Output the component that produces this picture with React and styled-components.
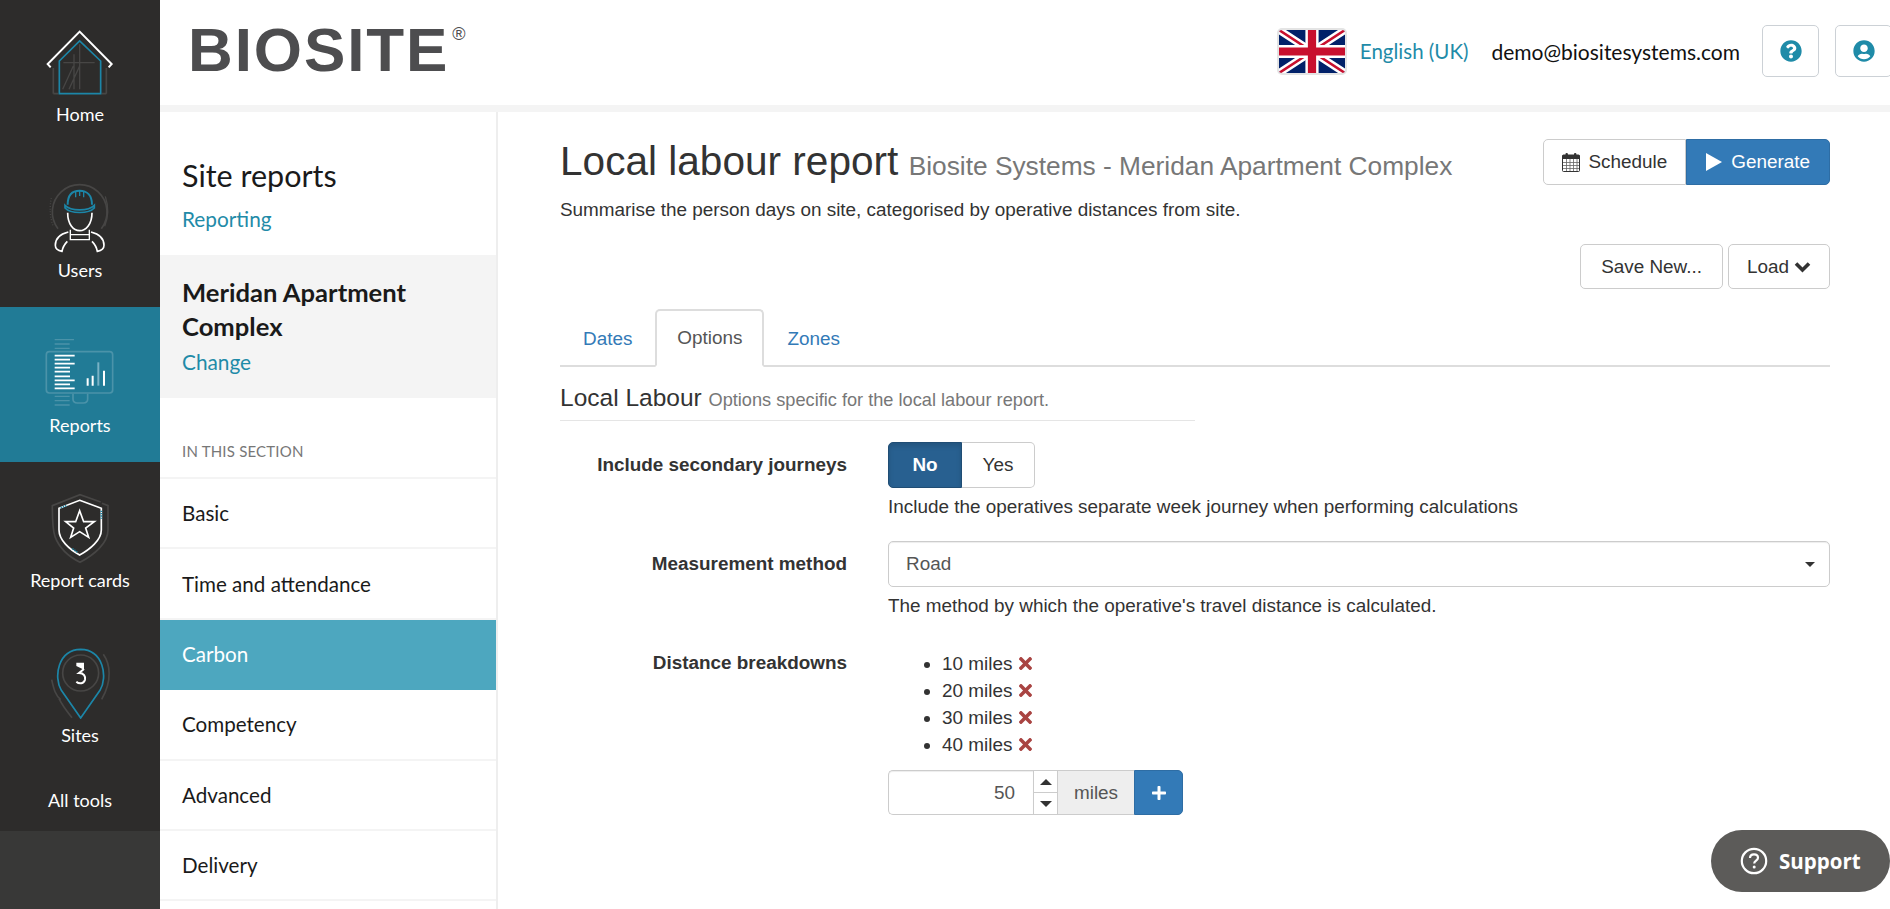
import React from 'react'
import styled, { createGlobalStyle } from 'styled-components'
import { FaQuestionCircle, FaUserCircle, FaTimes, FaPlus } from 'react-icons/fa'

const GlobalStyle = createGlobalStyle`
  html, body {
    margin: 0;
    padding: 0;
    background: #fff;
  }
  * { box-sizing: border-box; }
`

const SOFT = `Lato, "Noto Sans", sans-serif`
const ARIAL = `"Liberation Sans", Arial, sans-serif`

const Page = styled.div`
  display: flex;
  width: 1890px;
  height: 909px;
  overflow: hidden;
  position: relative;
  font-family: ${ARIAL};
  font-size: 18.9px;
  color: #333;
`

const Rail = styled.nav`
  width: 160px;
  flex: none;
  display: flex;
  flex-direction: column;
  background: #383837;
`

const RailItem = styled.a`
  display: flex;
  flex-direction: column;
  align-items: center;
  height: ${p => (p.$first ? 151.5 : 155.3)}px;
  padding-top: ${p => (p.$first ? 26 : 30)}px;
  background: ${p => (p.$active ? '#217b96' : '#2d2c2b')};
  color: #fff;
  font-family: ${SOFT};
  font-size: 18px;
  line-height: 22px;
  svg { display: block; height: 72px; margin-bottom: 5px; }
`

const RailTools = styled.a`
  height: 58.3px;
  padding-bottom: 3px;
  display: flex;
  align-items: center;
  justify-content: center;
  background: #2d2c2b;
  color: #fff;
  font-family: ${SOFT};
  font-size: 18px;
`

const Column = styled.div`
  flex: 1;
  min-width: 0;
  display: flex;
  flex-direction: column;
`

const Header = styled.header`
  height: 112px;
  flex: none;
  display: flex;
  align-items: center;
  padding: 0 0 3px 28px;
  border-bottom: 7px solid #f4f4f4;
`

const Logo = styled.div`
  font-family: ${ARIAL};
  font-weight: 700;
  font-size: 62px;
  line-height: 62px;
  color: #4d4d4f;
  letter-spacing: 1.9px;
  margin-top: -3px;
  sup {
    font-size: 18px;
    font-weight: 400;
    line-height: 0;
    vertical-align: 31px;
    margin-left: 3px;
    letter-spacing: 0;
  }
`

const HeaderRight = styled.div`
  margin-left: auto;
  margin-right: -2px;
  display: flex;
  align-items: center;
`

const Flag = styled.svg`
  width: 70px;
  height: 47px;
  border: 2px solid #e4e4e4;
  border-radius: 5px;
  margin-right: 13px;
`

const Lang = styled.a`
  font-family: ${SOFT};
  font-size: 20.5px;
  color: #1f8ba8;
  margin-right: 23px;
`

const Email = styled.span`
  font-family: ${SOFT};
  font-size: 21px;
  color: #111;
  margin-right: 22px;
`

const IconButton = styled.button`
  width: 57px;
  height: 52px;
  margin-left: ${p => (p.$tight ? 16 : 0)}px;
  background: #fff;
  border: 1px solid #ccd1d6;
  border-radius: 5px;
  display: flex;
  align-items: center;
  justify-content: center;
  color: #1f8ba8;
  font-size: 22px;
  padding: 0;
`

const Body = styled.div`
  flex: 1;
  min-height: 0;
  display: flex;
`

const SectionNav = styled.aside`
  width: 338px;
  flex: none;
  border-right: 2px solid #eee;
  font-family: ${SOFT};
`

const NavTop = styled.div`
  height: 143px;
  padding: 45px 22px 0 22px;
`

const NavTitle = styled.div`
  font-size: 30.5px;
  line-height: 36px;
  color: #1a1a1a;
  margin-bottom: 14px;
`

const TealLink = styled.a`
  display: block;
  font-size: 20.8px;
  line-height: 24px;
  color: #1f8ba8;
`

const SiteBlock = styled.div`
  height: 143px;
  padding: 20px 22px 0 22px;
  background: #f4f4f4;
`

const SiteName = styled.div`
  font-size: 25.6px;
  line-height: 34px;
  font-weight: 700;
  color: #1a1a1a;
  margin-bottom: 7px;
`

const SectionLabel = styled.div`
  height: 81px;
  padding: 44px 0 0 22px;
  font-size: 15px;
  line-height: 18px;
  letter-spacing: 0.2px;
  color: #777;
  border-bottom: 2px solid #f4f4f4;
`

const SectionRow = styled.a`
  display: flex;
  align-items: center;
  height: 70.4px;
  padding-left: 22px;
  font-size: 20.6px;
  color: ${p => (p.$active ? '#fff' : '#1a1a1a')};
  background: ${p => (p.$active ? '#4da7bf' : '#fff')};
  border-bottom: 2px solid ${p => (p.$active ? '#4da7bf' : '#f4f4f4')};
`

const Main = styled.main`
  flex: 1;
  min-width: 0;
  padding: 27px 60px 0 62px;
`

const TitleRow = styled.div`
  display: flex;
  align-items: flex-start;
  justify-content: space-between;
`

const Title = styled.h1`
  margin: 0;
  font-size: 40.6px;
  font-weight: 400;
  line-height: 44px;
  color: #333;
  small {
    font-size: 26.3px;
    color: #777;
    margin-left: -1px;
  }
`

const ButtonGroup = styled.div`
  display: flex;
`

const Button = styled.button`
  height: ${p => p.$h || 46}px;
  padding: 0 ${p => p.$px || 17}px;
  display: flex;
  align-items: center;
  gap: ${p => p.$gap || 8}px;
  font-family: ${ARIAL};
  font-size: 18.9px;
  color: ${p => (p.$primary ? '#fff' : '#333')};
  background: ${p => (p.$primary ? '#337ab7' : '#fff')};
  border: 1px solid ${p => (p.$primary ? '#2e6da4' : '#ccc')};
  border-radius: ${p => p.$radius || '5px'};
`

const Lead = styled.p`
  margin: 9px 0 0;
  font-size: 18.9px;
  line-height: 26px;
  color: #333;
`

const ActionsRow = styled.div`
  display: flex;
  justify-content: flex-end;
  gap: 5px;
  margin-top: 21px;
`

const Tabs = styled.div`
  display: flex;
  margin-top: 20px;
  height: 58px;
  border-bottom: 2px solid #ddd;
`

const Tab = styled.a`
  height: 58px;
  display: flex;
  align-items: center;
  padding: 0 ${p => (p.$active ? 20 : 21)}px;
  font-size: 18.9px;
  color: ${p => (p.$active ? '#555' : '#337ab7')};
  background: ${p => (p.$active ? '#fff' : 'transparent')};
  border: 2px solid ${p => (p.$active ? '#ddd' : 'transparent')};
  border-bottom: ${p => (p.$active ? '2px solid #fff' : '0')};
  border-radius: 5px 5px 0 0;
`

const Legend = styled.div`
  width: 635px;
  margin: 15px 0 21px;
  padding-bottom: 4px;
  font-size: 24.5px;
  line-height: 32px;
  border-bottom: 1px solid #e5e5e5;
  color: #333;
  small {
    font-size: 18.2px;
    color: #777;
  }
`

const FormRow = styled.div`
  display: grid;
  grid-template-columns: 287px 1fr;
  column-gap: 41px;
  margin-bottom: ${p => p.$mb || 0}px;
`

const Label = styled.label`
  text-align: right;
  font-weight: 700;
  font-size: 18.9px;
  line-height: 46px;
  color: #333;
`

const Toggle = styled.div`
  display: flex;
`

const ToggleOption = styled.button`
  height: 46px;
  width: ${p => (p.$on ? 74 : 73)}px;
  padding: 0;
  font-family: ${ARIAL};
  font-size: 18.9px;
  font-weight: ${p => (p.$on ? 700 : 400)};
  color: ${p => (p.$on ? '#fff' : '#333')};
  background: ${p => (p.$on ? '#286090' : '#fff')};
  border: 1px solid ${p => (p.$on ? '#204d74' : '#ccc')};
  border-left-width: ${p => (p.$on ? 1 : 0)}px;
  border-radius: ${p => (p.$on ? '5px 0 0 5px' : '0 5px 5px 0')};
  box-shadow: ${p => (p.$on ? 'inset 0 3px 5px rgba(0,0,0,.125)' : 'none')};
`

const Help = styled.div`
  margin-top: 6px;
  font-size: 18.9px;
  line-height: 26px;
  color: #333;
`

const Select = styled.div`
  height: 46px;
  display: flex;
  align-items: center;
  justify-content: space-between;
  padding: 0 14px 0 17px;
  font-size: 18.9px;
  color: #555;
  border: 1px solid #ccc;
  border-radius: 5px;
  box-shadow: inset 0 1px 1px rgba(0,0,0,.075);
`

const Caret = styled.span`
  width: 0;
  height: 0;
  border-left: 5px solid transparent;
  border-right: 5px solid transparent;
  border-top: 5px solid #333;
`

const Breakdown = styled.ul`
  margin: 0;
  padding: 10px 0 0 54px;
  font-size: 18.9px;
  line-height: 27px;
  color: #333;
  svg {
    color: #a94442;
    font-size: 19px;
    margin-left: 4px;
    vertical-align: -3px;
  }
`

const AddGroup = styled.div`
  display: flex;
  width: 295px;
  height: 45px;
  margin-top: 12px;
`

const NumberBox = styled.div`
  width: 145px;
  display: flex;
  align-items: center;
  justify-content: flex-end;
  padding-right: 18px;
  font-size: 18.9px;
  color: #555;
  border: 1px solid #ccc;
  border-right: 0;
  border-radius: 5px 0 0 5px;
  box-shadow: inset 0 1px 1px rgba(0,0,0,.075);
`

const Spinner = styled.div`
  width: 24px;
  display: flex;
  flex-direction: column;
  border: 1px solid #ccc;
  border-right: 0;
`

const SpinCell = styled.div`
  flex: 1;
  display: flex;
  align-items: center;
  justify-content: center;
  border-top: ${p => (p.$down ? '1px solid #ccc' : '0')};
  &::after {
    content: '';
    border-left: 6px solid transparent;
    border-right: 6px solid transparent;
    ${p => (p.$down ? 'border-top: 6px solid #333;' : 'border-bottom: 6px solid #333;')}
  }
`

const Addon = styled.div`
  width: 77px;
  display: flex;
  align-items: center;
  justify-content: center;
  font-size: 18.9px;
  color: #555;
  background: #eee;
  border: 1px solid #ccc;
  border-right: 0;
`

const AddButton = styled.button`
  flex: 1;
  padding: 0;
  display: flex;
  align-items: center;
  justify-content: center;
  color: #fff;
  font-size: 16px;
  background: #337ab7;
  border: 1px solid #2e6da4;
  border-radius: 0 5px 5px 0;
`

const Support = styled.a`
  position: absolute;
  right: 0;
  bottom: 17px;
  width: 179px;
  height: 62px;
  display: flex;
  align-items: center;
  gap: 11px;
  padding-left: 29px;
  color: #fff;
  background: #5c5b59;
  border-radius: 31px;
  font-family: "Open Sans", sans-serif;
  font-weight: 700;
  font-size: 20.5px;
`

const CalendarIcon = () => (
  <svg width="18" height="20" viewBox="0 0 18 20">
    <rect x="0.5" y="3" width="17" height="16.5" rx="1" fill="#fff" stroke="#333" />
    <rect x="0.5" y="3" width="17" height="4" fill="#333" />
    <rect x="3.5" y="1" width="2.4" height="5" rx="1" fill="#333" />
    <rect x="12" y="1" width="2.4" height="5" rx="1" fill="#333" />
    <path d="M1 10.5h16M1 13.5h16M1 16.5h16M4.5 7v12M8 7v12M11.5 7v12M15 7v12" stroke="#666" strokeWidth="0.8" fill="none" />
  </svg>
)

const PlayIcon = () => (
  <svg width="16" height="18" viewBox="0 0 16 18">
    <path d="M0 0L16 9L0 18Z" fill="#fff" />
  </svg>
)

const ChevronIcon = () => (
  <svg width="17" height="12" viewBox="0 0 17 12">
    <path d="M2 2.5L8.5 9L15 2.5" fill="none" stroke="#333" strokeWidth="3.6" />
  </svg>
)

const UnionJack = () => (
  <Flag viewBox="0 0 60 40" preserveAspectRatio="none">
    <rect width="60" height="40" fill="#012169" />
    <path d="M0 0L60 40M60 0L0 40" stroke="#fff" strokeWidth="7" />
    <path d="M0 0L60 40M60 0L0 40" stroke="#c8102e" strokeWidth="2.4" />
    <path d="M30 0V40M0 20H60" stroke="#fff" strokeWidth="12" />
    <path d="M30 0V40M0 20H60" stroke="#c8102e" strokeWidth="7.5" />
  </Flag>
)

const GREY = '#474645'
const TEAL = '#1c86a8'

const HomeIcon = () => (
  <svg viewBox="70 50 215 216" fill="none">
    <path d="M98 176V253M257 176V253M98 253H112M257 253H243" stroke={GREY} strokeWidth="5" />
    <path d="M160 135V240M177 105V240M128 160H222M126 240L158 170M145 240L177 170" stroke={GREY} strokeWidth="4" />
    <path d="M116 253V155L177 95L240 155V253Z" stroke={TEAL} strokeWidth="5" />
    <path d="M90 174L81 164L177 67L273 164L264 174" stroke="#fff" strokeWidth="6" />
  </svg>
)

const UsersIcon = () => (
  <svg viewBox="70 522 215 216" fill="none">
    <path d="M112 662A82 82 0 1 1 242 662" stroke={GREY} strokeWidth="5" />
    <path d="M92 570C86 600 88 630 98 655" stroke={GREY} strokeWidth="4" strokeDasharray="3 5" />
    <path d="M254 565C264 595 264 625 252 655" stroke={GREY} strokeWidth="4" />
    <path d="M141 590C141 562 155 548 177 548C199 548 214 562 214 590" stroke={TEAL} strokeWidth="6" />
    <path d="M165 550V568M189 550V568M177 547V564" stroke={TEAL} strokeWidth="4" />
    <path d="M133 592C150 610 204 610 221 592V600C204 618 150 618 133 600Z" stroke={TEAL} strokeWidth="5" />
    <path d="M141 614C141 648 158 668 177 668C196 668 214 648 214 614" stroke="#fff" strokeWidth="5" />
    <path d="M149 665V695H206V665M149 680H206" stroke="#fff" strokeWidth="4" />
    <path d="M143 672C118 678 104 690 104 712C104 722 112 728 124 730C126 718 132 708 140 700M211 672C236 678 250 690 250 712C250 722 242 728 230 730C228 718 222 708 214 700" stroke="#fff" strokeWidth="5" />
  </svg>
)

const ReportsIcon = () => (
  <svg viewBox="70 54 215 216" fill="none">
    <path d="M102 62H160M102 75H147M102 88H147M102 232H147M102 245H147M102 258H147" stroke="#4b93a9" strokeWidth="4" />
    <rect x="77" y="98" width="199" height="124" rx="9" stroke="#4b93a9" strokeWidth="5" />
    <path d="M157 224V240C157 248 162 252 170 252H188C196 252 201 248 201 240V224" stroke="#4b93a9" strokeWidth="5" />
    <path d="M102 110H162M102 122H148M102 134H162M102 146H148M102 158H148M102 172H148M102 184H162M102 196H148M102 208H162" stroke="#fff" strokeWidth="5" />
    <path d="M201 178V200M216 170V200M250 155V200" stroke="#fff" strokeWidth="6" />
    <path d="M233 130V200" stroke="#79b2c5" strokeWidth="6" />
  </svg>
)

const ShieldIcon = () => (
  <svg viewBox="70 516 215 216" fill="none">
    <path d="M244 550L262 557V630C262 670 220 705 178 727C152 714 118 690 103 650C96 630 95 600 95 557L178 524L240 546" stroke={GREY} strokeWidth="5" />
    <path d="M177 541L242 565V630C242 660 208 688 177 705C146 688 115 660 115 630V565Z" stroke="#fff" strokeWidth="5" />
    <path d="M120 563L140 556M242 572V596M155 686L172 698" stroke={TEAL} strokeWidth="5" strokeDasharray="4 3" />
    <path d="M177 572L189 605H221L195 624L204 652L177 635L150 652L159 624L135 605H165Z" stroke="#fff" strokeWidth="5" />
  </svg>
)

const SitesIcon = () => (
  <svg viewBox="70 50 215 216" fill="none">
    <path d="M248 72C268 100 276 150 243 207M93 148C100 180 105 195 120 208M115 205C125 225 140 245 154 262" stroke={GREY} strokeWidth="5" />
    <circle cx="180" cy="128" r="54" stroke={GREY} strokeWidth="5" />
    <path d="M180 263L122 180C98 140 112 58 180 57C248 58 262 140 238 180Z" stroke={TEAL} strokeWidth="5" />
    <path d="M167 97L190 97L190 118L167 107Z" fill="#fff" />
    <path d="M190 116L175 128C190 128 195 138 193 148C190 160 176 162 167 154" stroke="#fff" strokeWidth="6" />
  </svg>
)

const SupportIcon = () => (
  <svg width="28" height="28" viewBox="0 0 28 28" fill="none">
    <circle cx="14" cy="14" r="12.2" stroke="#fff" strokeWidth="2.2" />
    <path d="M10 11C10 8.5 12 7.4 14 7.4C16.4 7.4 18 8.8 18 10.8C18 13.6 14.2 13.8 14.2 16.6" stroke="#fff" strokeWidth="2.2" />
    <circle cx="14.2" cy="20" r="1.5" fill="#fff" />
  </svg>
)

const railItems = [
  { label: 'Home', icon: <HomeIcon />, first: true },
  { label: 'Users', icon: <UsersIcon /> },
  { label: 'Reports', icon: <ReportsIcon />, active: true },
  { label: 'Report cards', icon: <ShieldIcon /> },
  { label: 'Sites', icon: <SitesIcon /> },
]

const sections = ['Basic', 'Time and attendance', 'Carbon', 'Competency', 'Advanced', 'Delivery']
const distances = [10, 20, 30, 40]

const App = () => {
  return (
    <Page>
      <GlobalStyle />
      <Rail>
        {railItems.map(item => (
          <RailItem key={item.label} $first={item.first} $active={item.active}>
            {item.icon}
            {item.label}
          </RailItem>
        ))}
        <RailTools>All tools</RailTools>
      </Rail>
      <Column>
        <Header>
          <Logo>BIOSITE<sup>®</sup></Logo>
          <HeaderRight>
            <UnionJack />
            <Lang>English (UK)</Lang>
            <Email>demo@biositesystems.com</Email>
            <IconButton><FaQuestionCircle /></IconButton>
            <IconButton $tight><FaUserCircle /></IconButton>
          </HeaderRight>
        </Header>
        <Body>
          <SectionNav>
            <NavTop>
              <NavTitle>Site reports</NavTitle>
              <TealLink>Reporting</TealLink>
            </NavTop>
            <SiteBlock>
              <SiteName>Meridan Apartment Complex</SiteName>
              <TealLink>Change</TealLink>
            </SiteBlock>
            <SectionLabel>IN THIS SECTION</SectionLabel>
            {sections.map(name => (
              <SectionRow key={name} $active={name === 'Carbon'}>{name}</SectionRow>
            ))}
          </SectionNav>
          <Main>
            <TitleRow>
              <Title>Local labour report <small>Biosite Systems - Meridan Apartment Complex</small></Title>
              <ButtonGroup>
                <Button $px={18} $radius="5px 0 0 5px"><CalendarIcon />Schedule</Button>
                <Button $primary $px={19} $radius="0 5px 5px 0" $gap={9}><PlayIcon />Generate</Button>
              </ButtonGroup>
            </TitleRow>
            <Lead>Summarise the person days on site, categorised by operative distances from site.</Lead>
            <ActionsRow>
              <Button $h={45} $px={20}>Save New...</Button>
              <Button $h={45} $px={18} $gap={5}>Load <ChevronIcon /></Button>
            </ActionsRow>
            <Tabs>
              <Tab>Dates</Tab>
              <Tab $active>Options</Tab>
              <Tab>Zones</Tab>
            </Tabs>
            <Legend>Local Labour <small>Options specific for the local labour report.</small></Legend>
            <FormRow $mb={21}>
              <Label>Include secondary journeys</Label>
              <div>
                <Toggle>
                  <ToggleOption $on>No</ToggleOption>
                  <ToggleOption>Yes</ToggleOption>
                </Toggle>
                <Help>Include the operatives separate week journey when performing calculations</Help>
              </div>
            </FormRow>
            <FormRow $mb={21}>
              <Label>Measurement method</Label>
              <div>
                <Select>Road<Caret /></Select>
                <Help>The method by which the operative's travel distance is calculated.</Help>
              </div>
            </FormRow>
            <FormRow>
              <Label>Distance breakdowns</Label>
              <div>
                <Breakdown>
                  {distances.map(d => (
                    <li key={d}>{d} miles<FaTimes /></li>
                  ))}
                </Breakdown>
                <AddGroup>
                  <NumberBox>50</NumberBox>
                  <Spinner>
                    <SpinCell />
                    <SpinCell $down />
                  </Spinner>
                  <Addon>miles</Addon>
                  <AddButton><FaPlus /></AddButton>
                </AddGroup>
              </div>
            </FormRow>
          </Main>
        </Body>
      </Column>
      <Support><SupportIcon />Support</Support>
    </Page>
  )
}

export default App
